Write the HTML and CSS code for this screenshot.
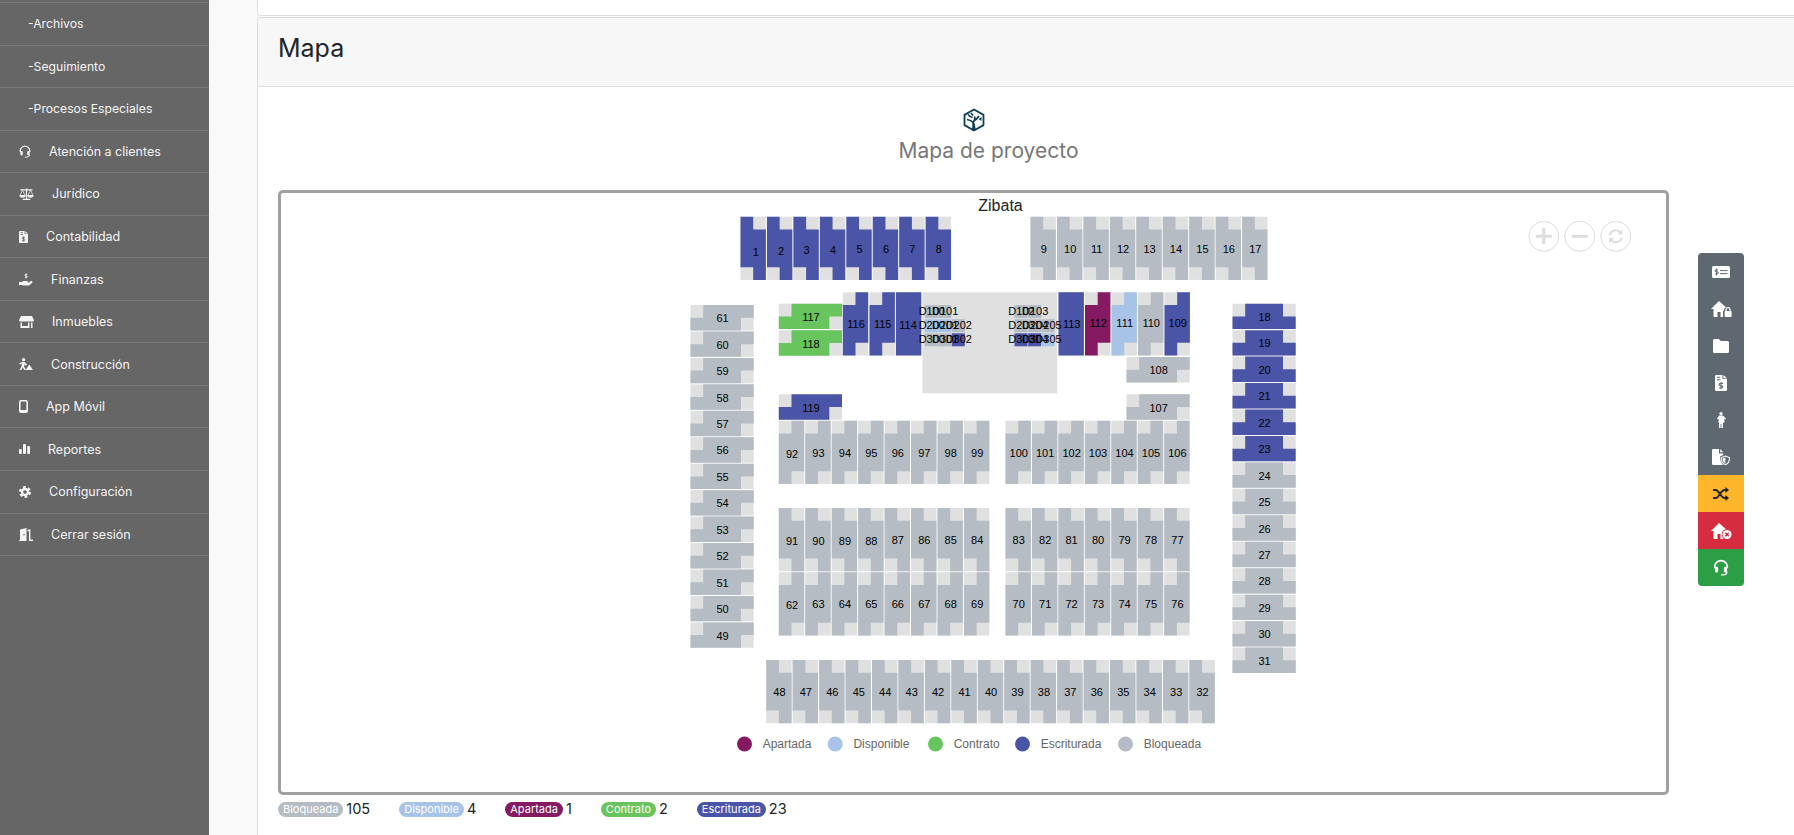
FILE: index.html
```html
<!DOCTYPE html>
<html lang="es">
<head>
  <meta charset="UTF-8" />
  <title>Mapa de proyecto</title>
  <link rel="stylesheet" href="styles.css">
</head>
<body>
  <!-- icon sprite -->
  <svg class="sprite" xmlns="http://www.w3.org/2000/svg">
    <symbol id="i-headset" viewBox="0 0 12 13">
      <path d="M1.2 7V6a4.8 4.8 0 0 1 9.6 0v1" fill="none" stroke="currentColor" stroke-width="1.3"/>
      <rect x="1.4" y="6" width="2.4" height="4.4" rx="1.1" fill="currentColor"/>
      <rect x="8.2" y="6" width="2.4" height="4.4" rx="1.1" fill="currentColor"/>
      <path d="M10.6 9.5c0 1.900-1.400 2.600-3 2.600H6" fill="none" stroke="currentColor" stroke-width="1"/>
    </symbol>
    <symbol id="i-scale" viewBox="0 0 15 12">
      <path d="M7.5.5v10.2M3.8 11.3h7.4M1.5 1.8h12" fill="none" stroke="currentColor" stroke-width="1.2"/>
      <path d="M3.5 2L1 7.5h5zM11.5 2L9 7.5h5z" fill="none" stroke="currentColor" stroke-width=".7"/>
      <path d="M.3 7.3a3.2 2.4 0 0 0 6.4 0zM8.3 7.3a3.2 2.4 0 0 0 6.4 0z" fill="currentColor"/>
    </symbol>
    <symbol id="i-file-dollar" viewBox="0 0 9 12">
      <path d="M1 0h4.6v3H9v8a1 1 0 0 1-1 1H1a1 1 0 0 1-1-1V1a1 1 0 0 1 1-1zM6.3 0L9 2.4H6.3z" fill="currentColor"/>
      <path d="M1.4 1.7h2.6M1.4 3.5h2.6M6 6.3H4a.8.8 0 0 0 0 1.7h1a.8.8 0 0 1 0 1.7H3M4.5 5.5v5" fill="none" stroke="var(--cut)" stroke-width=".8"/>
    </symbol>
    <symbol id="i-hand" viewBox="0 0 14 13">
      <path d="M0 9h2.6l1.9-1.1H8a1 1 0 0 1 0 2.1H6.2h2.5l3-1.8a1 1 0 0 1 1.4 1.6l-3 2.6H4.2L2.8 12H0z" fill="currentColor"/>
      <path d="M8.2 1.4H6.6a.7.7 0 0 0 0 1.5h.9a.7.7 0 0 1 0 1.5H5.8M7 .4v5" fill="none" stroke="currentColor" stroke-width=".8"/>
    </symbol>
    <symbol id="i-store" viewBox="0 0 15 12">
      <path d="M2 0h11l2 4.2a1.2 1.2 0 0 1-1 1.3H1a1.2 1.2 0 0 1-1-1.300zM1.5 6.5H3V10h6V6.5h1.5V12h-9zM12 6.5h1.5V12H12z" fill="currentColor"/>
    </symbol>
    <symbol id="i-digging" viewBox="0 0 14 12">
      <circle cx="4.6" cy="1.8" r="1.7" fill="currentColor"/>
      <path d="M2.8 4h3.1L8 6.8l-1 .9-1.500-1.200L5 8.600 7 12H5.400L3.700 9.600 2.300 12H.6l2-4zM.2 5.600L2.600 4l.4 1-2.200 1.600zM6.600 12l3.600-5.400L14 12z" fill="currentColor"/>
    </symbol>
    <symbol id="i-mobile" viewBox="0 0 9 13">
      <rect x=".8" y=".8" width="7.4" height="11.4" rx="1.3" fill="none" stroke="currentColor" stroke-width="1.6"/>
      <rect x="1" y="10" width="7" height="2.4" fill="currentColor"/>
    </symbol>
    <symbol id="i-bars" viewBox="0 0 11 10">
      <rect x="0" y="5" width="2.8" height="5" rx="1" fill="currentColor"/>
      <rect x="4" y="0" width="3" height="10" rx="1" fill="currentColor"/>
      <rect x="8.2" y="2" width="2.8" height="8" rx="1" fill="currentColor"/>
    </symbol>
    <symbol id="i-cog" viewBox="-6 -6 12 12">
      <circle r="4.9" fill="none" stroke="currentColor" stroke-width="2.2" stroke-dasharray="2.7 2.43"/>
      <circle r="3" fill="none" stroke="currentColor" stroke-width="2.4"/>
    </symbol>
    <symbol id="i-door" viewBox="0 0 14 13">
      <path d="M0 13v-1h1V1.4L7.5 0v13zM5 6a.8.8 0 1 0 0 1.6.8.8 0 0 0 0-1.6z" fill="currentColor" fill-rule="evenodd"/>
      <path d="M8.5 1.6h2.9v9.8H14V13h-4V3.2H8.5z" fill="currentColor"/>
    </symbol>
    <symbol id="i-check" viewBox="0 0 18 12">
      <rect width="18" height="12" rx="1.6" fill="currentColor"/>
      <path d="M5.8 3.8H4a.9.9 0 0 0 0 2h1.2a.9.9 0 0 1 0 2.2H3.2M4.6 2.6v6.8M8 4.6h7.500M8 7.600h7.500" fill="none" stroke="var(--cut)" stroke-width="1"/>
    </symbol>
    <symbol id="i-house-lock" viewBox="0 0 21 16">
      <path d="M8 0l7 6.2a4 4 0 0 0-2.3 3.8H12v6H9.5v-5h-3v5H3.5a1 1 0 0 1-1-1V8H0z" fill="currentColor"/>
      <path d="M15 10V8.6a2 2 0 0 1 4 0V10" fill="none" stroke="currentColor" stroke-width="1.2"/>
      <rect x="13.6" y="10" width="7" height="6" rx="1" fill="currentColor"/>
    </symbol>
    <symbol id="i-folder" viewBox="0 0 16 14">
      <path d="M1.6 0h4.2l2 2h6.6A1.6 1.6 0 0 1 16 3.6v8.8a1.6 1.6 0 0 1-1.6 1.6H1.6A1.6 1.6 0 0 1 0 12.4V1.6A1.6 1.6 0 0 1 1.6 0z" fill="currentColor"/>
    </symbol>
    <symbol id="i-person" viewBox="0 0 10 16">
      <circle cx="5" cy="1.6" r="1.6" fill="currentColor"/>
      <path d="M3 3.6h4l3 3.2-1 .8-1-1 .7 3.4L7 11v5H5.4v-4h-.8v4H3v-5l-.7-.9L3 6.600l-1 1-1-.8z" fill="currentColor"/>
    </symbol>
    <symbol id="i-file-shield" viewBox="0 0 18 16">
      <path d="M1.2 0H7v4.4h4.2V6L8 7.400c0 3.400 1 6.400 3 8.600H1.200A1.200 1.200 0 0 1 0 14.800V1.200A1.200 1.200 0 0 1 1.200 0zM8.200 0l3 3.200h-3z" fill="currentColor"/>
      <path d="M13.4 7l4.2 1.6c0 3-1 6-4.2 7.2-3.2-1.200-4.200-4.200-4.200-7.200z" fill="none" stroke="currentColor" stroke-width="1.1"/>
      <path d="M13.4 8.4v6c-1.800-.9-2.800-3-2.900-5z" fill="currentColor"/>
    </symbol>
    <symbol id="i-shuffle" viewBox="0 0 16 14">
      <path d="M0 3h2.6c3.600 0 5 8 9 8h1.400M0 11h2.600c3.600 0 5-8 9-8h1.400" fill="none" stroke="currentColor" stroke-width="1.9"/>
      <path d="M12.4 0L16 3l-3.6 3zM12.4 8L16 11l-3.6 3z" fill="currentColor"/>
    </symbol>
    <symbol id="i-house-x" viewBox="0 0 21 16">
      <path d="M8 0l7 6.200a5 5 0 0 0-4.200 4.800c0 2 .6 3.600 1.800 5H9.500v-5h-3v5H3.500a1 1 0 0 1-1-1V8H0z" fill="currentColor"/>
      <circle cx="16" cy="11.5" r="4.5" fill="currentColor"/>
      <path d="M14.3 9.800l3.400 3.400M17.700 9.800l-3.400 3.400" fill="none" stroke="var(--cut)" stroke-width="1.5"/>
    </symbol>
    <symbol id="i-tree" viewBox="0 0 24 24">
      <path d="M12 1.500l9.500 5.400v10.200L12 22.500 2.500 17.100V6.900z" fill="none" stroke="currentColor" stroke-width="1.8" stroke-linejoin="round"/>
      <path d="M11 21.500c.5-3 .5-5 0-7-1.500-2-3.500-2.500-6-3M11.200 15c1.500-2 1.800-4 1.600-6.500M11.500 13c2-1 4-2.500 5.500-5M6 6.500c1.200 1.500 2.500 2.500 4.500 3M9 5l2 2.500" fill="none" stroke="currentColor" stroke-width="1.7"/>
      <path d="M9.500 22.200c1-1.800 1.400-4.200 1.500-7l2 .5c0 2.500.4 4.800 1.300 6.300z" fill="currentColor"/>
      <path d="M16.500 11l3-2v4z" fill="currentColor"/>
    </symbol>
  </svg>

  <aside class="sidebar">
    <ul class="nav">
      <li class="nav-item nav-sub">-Archivos</li>
      <li class="nav-item nav-sub">-Seguimiento</li>
      <li class="nav-item nav-sub">-Procesos Especiales</li>
      <li class="nav-item"><svg width="12" height="13"><use href="#i-headset"/></svg>Atención a clientes</li>
      <li class="nav-item"><svg width="15" height="12"><use href="#i-scale"/></svg>Jurídico</li>
      <li class="nav-item"><svg width="9" height="12"><use href="#i-file-dollar"/></svg>Contabilidad</li>
      <li class="nav-item"><svg width="14" height="13"><use href="#i-hand"/></svg>Finanzas</li>
      <li class="nav-item"><svg width="15" height="12"><use href="#i-store"/></svg>Inmuebles</li>
      <li class="nav-item"><svg width="14" height="12"><use href="#i-digging"/></svg>Construcción</li>
      <li class="nav-item"><svg width="9" height="13"><use href="#i-mobile"/></svg>App Móvil</li>
      <li class="nav-item"><svg width="11" height="10"><use href="#i-bars"/></svg>Reportes</li>
      <li class="nav-item"><svg width="12" height="12"><use href="#i-cog"/></svg>Configuración</li>
      <li class="nav-item"><svg width="14" height="13"><use href="#i-door"/></svg>Cerrar sesión</li>
    </ul>
  </aside>

  <main class="content">
    <div class="card-stub"></div>
    <section class="card">
      <header class="card-header">
        <h2>Mapa</h2>
      </header>
      <div class="card-body">
        <div class="map-heading">
          <svg class="map-logo" width="24" height="24"><use href="#i-tree"/></svg>
          <h3>Mapa de proyecto</h3>
        </div>
        <div class="map-box">
          <svg id="map" xmlns="http://www.w3.org/2000/svg"></svg>
        </div>
        <div class="totals">
          <div class="total"><span class="badge badge-bloqueada">Bloqueada</span>105</div>
          <div class="total"><span class="badge badge-disponible">Disponible</span>4</div>
          <div class="total"><span class="badge badge-apartada">Apartada</span>1</div>
          <div class="total"><span class="badge badge-contrato">Contrato</span>2</div>
          <div class="total"><span class="badge badge-escriturada">Escriturada</span>23</div>
        </div>
      </div>
    </section>
  </main>

  <div class="toolbar">
    <button class="tool tool-gray"><svg width="18" height="12"><use href="#i-check"/></svg></button>
    <button class="tool tool-gray"><svg width="21" height="16"><use href="#i-house-lock"/></svg></button>
    <button class="tool tool-gray"><svg width="16" height="14"><use href="#i-folder"/></svg></button>
    <button class="tool tool-gray"><svg width="12" height="16"><use href="#i-file-dollar"/></svg></button>
    <button class="tool tool-gray"><svg width="10" height="16"><use href="#i-person"/></svg></button>
    <button class="tool tool-gray"><svg width="18" height="16"><use href="#i-file-shield"/></svg></button>
    <button class="tool tool-warning"><svg width="16" height="14"><use href="#i-shuffle"/></svg></button>
    <button class="tool tool-danger"><svg width="21" height="16"><use href="#i-house-x"/></svg></button>
    <button class="tool tool-success"><svg width="16" height="17"><use href="#i-headset"/></svg></button>
  </div>

  <script src="map.js"></script>
</body>
</html>
```

FILE: styles.css
```css
body {
    margin: 0;
    height: 100vh;
    display: flex;
    overflow: hidden;
    background-color: #f9f9f9;
    font-family: Inter, "Open Sans", sans-serif;
}

.sprite {
    display: none;
}

.sidebar {
    --cut: #666666;
    width: 209px;
    flex-shrink: 0;
    padding-top: 2px;
    background-color: #666666;
    color: #ffffff;
}

.nav {
    margin: 0;
    padding: 0;
    list-style: none;
    border-top: 1px solid #787878;
}

.nav-item {
    height: 42.55px;
    box-sizing: border-box;
    display: flex;
    align-items: center;
    gap: 18px;
    padding-left: 19px;
    border-bottom: 1px solid #787878;
    font-size: 12.5px;
    color: #f4f4f4;
}

.nav-sub {
    padding-left: 28px;
    font-size: 12.2px;
}

.content {
    flex: 1;
    min-width: 0;
    height: 100%;
    display: flex;
    flex-direction: column;
    padding-left: 48px;
}

.card-stub {
    height: 16px;
    flex-shrink: 0;
    box-sizing: border-box;
    background-color: #ffffff;
    border: 1px solid #dddddd;
    border-top: none;
    border-right: none;
    border-radius: 0 0 0 4px;
}

.card {
    flex: 1;
    min-height: 0;
    margin-top: 1px;
    background-color: #ffffff;
    border: 1px solid #dddddd;
    border-right: none;
    border-bottom: none;
    border-radius: 4px 0 0 0;
}

.card-header {
    height: 69px;
    box-sizing: border-box;
    display: flex;
    align-items: center;
    padding-left: 20px;
    padding-bottom: 8px;
    background-color: #f7f7f7;
    border-bottom: 1px solid #dddddd;
}

.card-header h2 {
    margin: 0;
    font-size: 25px;
    font-weight: 400;
    color: #212529;
}

.card-body {
    padding: 0 125px 0 20px;
}

.map-heading {
    height: 103px;
    padding-top: 21px;
    box-sizing: border-box;
    display: flex;
    flex-direction: column;
    align-items: center;
}

.map-logo {
    color: #0f3d50;
}

.map-heading h3 {
    margin: 6px 0 0 30px;
    font-size: 21px;
    line-height: 25px;
    font-weight: 400;
    color: #777777;
}

.map-box {
    height: 605px;
    box-sizing: border-box;
    border: 3px solid #a0a0a0;
    border-radius: 5px;
}

#map {
    display: block;
    width: 100%;
    height: 100%;
    font-family: "Liberation Sans", Arial, sans-serif;
}

.totals {
    display: flex;
    gap: 29px;
    margin-top: 6px;
    font-size: 14.5px;
    color: #212529;
}

.total {
    display: flex;
    align-items: flex-start;
    gap: 3px;
    line-height: 16px;
}

.badge {
    padding: 0 5px;
    margin-top: 1px;
    border-radius: 8px;
    font-size: 11px;
    line-height: 15px;
    color: #ffffff;
}

.badge-bloqueada { background-color: #b5bcc3; }
.badge-disponible { background-color: #a7c3e8; }
.badge-apartada { background-color: #851a63; }
.badge-contrato { background-color: #68c45c; }
.badge-escriturada { background-color: #4b55a8; }

/* floating actions on the right side */
.toolbar {
    position: absolute;
    top: 253px;
    right: 50px;
    width: 46px;
    display: flex;
    flex-direction: column;
    border-radius: 4px;
    overflow: hidden;
}

.tool {
    height: 37px;
    padding: 0;
    border: none;
    display: flex;
    align-items: center;
    justify-content: center;
    color: #ffffff;
}

.tool-gray {
    --cut: #5f6770;
    background-color: #5f6770;
}

.tool-warning {
    background-color: #fdb52b;
    color: #222222;
}

.tool-danger {
    --cut: #d62c3f;
    background-color: #d62c3f;
}

.tool-success {
    background-color: #2b9e46;
}
```

FILE: map.js
```js
// Draws the lots of the project map. Coordinates are page pixels, see viewBox.
const SVG_NS = 'http://www.w3.org/2000/svg';
const map = document.getElementById('map');
map.setAttribute('viewBox', '281 193 1384 599');

const colors = {
    apartada: '#851a63',
    disponible: '#a7c3e8',
    contrato: '#68c45c',
    escriturada: '#4b55a8',
    bloqueada: '#b5bcc3'
};
const NOTCH_COLOR = '#e0e0e0';
const PITCH = 26.45;
const LONG = 63.2;
const SHORT = 25.4;
const N = 12.7;

const escrituradas = [109, 113, 114, 115, 116, 119];

// some labels sit a little off the lot centre
const labelOffsets = {
    1: [2, 3], 2: [1, 2], 3: [0, 1], 4: [0, 1],
    92: [0, 1], 62: [0, 1], 91: [0, 1], 90: [0, 1], 89: [0, 1], 88: [0, 1],
    114: [-1, 1], 112: [0, -1], 111: [0, -1], 110: [0, -1], 109: [0, -1]
};

function statusOf(num) {
    if ((num >= 1 && num <= 8) || (num >= 18 && num <= 23) || escrituradas.includes(num)) return 'escriturada';
    if (num === 117 || num === 118) return 'contrato';
    if (num === 112) return 'apartada';
    if (num === 111) return 'disponible';
    return 'bloqueada';
}

function add(tag, attrs, text) {
    const el = document.createElementNS(SVG_NS, tag);
    for (const key in attrs) el.setAttribute(key, attrs[key]);
    if (text !== undefined) el.textContent = text;
    map.appendChild(el);
    return el;
}

function shapePoints(shape, x, y, w, h) {
    const r = x + w, b = y + h;
    if (shape === 'tlbr') return [[x + N, y], [r, y], [r, b - N], [r - N, b - N], [r - N, b], [x, b], [x, y + N], [x + N, y + N]];
    if (shape === 'trbl') return [[x, y], [r - N, y], [r - N, y + N], [r, y + N], [r, b], [x + N, b], [x + N, b - N], [x, b - N]];
    if (shape === 'tltr') return [[x + N, y], [r - N, y], [r - N, y + N], [r, y + N], [r, b], [x, b], [x, y + N], [x + N, y + N]];
    return [[x, y], [r, y], [r, b], [x, b]];
}

function lot(num, shape, x, y, w, h) {
    const offset = labelOffsets[num] || [0, 0];
    add('rect', { x: x, y: y, width: w, height: h, fill: NOTCH_COLOR });
    add('polygon', { points: shapePoints(shape, x, y, w, h).join(' '), fill: colors[statusOf(num)] });
    add('text', {
        x: x + w / 2 + 0.5 + offset[0],
        y: y + h / 2 + 4.5 + offset[1],
        'text-anchor': 'middle',
        'font-size': 11,
        fill: '#000000'
    }, num);
}

// a run of lots from `from` to `to`, standing side by side or stacked
function run(from, to, shape, x, y, vertical) {
    const step = from <= to ? 1 : -1;
    let i = 0;
    for (let num = from; num !== to + step; num += step) {
        if (vertical) lot(num, shape, x, y + i * PITCH, LONG, SHORT);
        else lot(num, shape, x + i * PITCH, y, SHORT, LONG);
        i++;
    }
}

// centre block with the small D lots
add('rect', { x: 922, y: 292.3, width: 134.7, height: 101, fill: NOTCH_COLOR });

run(1, 8, 'trbl', 740, 216.7);
run(9, 17, 'trbl', 1030, 216.7);
run(18, 31, 'tltr', 1232, 303.7, true);
run(48, 32, 'trbl', 765.7, 660);
run(61, 49, 'tlbr', 690, 305, true);
run(92, 99, 'tlbr', 778.3, 420.7);
run(100, 106, 'tlbr', 1005, 420.7);
run(91, 84, 'trbl', 778.3, 508);
run(83, 77, 'trbl', 1005, 508);
run(62, 69, 'tlbr', 778.3, 572.3);
run(70, 76, 'tlbr', 1005, 572.3);

lot(117, 'tlbr', 778.3, 303.7, LONG, SHORT);
lot(118, 'tlbr', 778.3, 330.3, LONG, SHORT);
lot(119, 'tlbr', 778.3, 394.3, LONG, SHORT);
lot(108, 'tlbr', 1126, 357, LONG, SHORT);
lot(107, 'tlbr', 1126, 394.3, LONG, SHORT);

lot(116, 'tlbr', 842.3, 292.3, SHORT, LONG);
lot(115, 'tlbr', 869, 292.3, SHORT, LONG);
lot(114, 'solid', 895.4, 292.3, SHORT, LONG);
lot(113, 'solid', 1058, 292.3, SHORT, LONG);
lot(112, 'tlbr', 1084.5, 292.3, SHORT, LONG);
lot(111, 'tlbr', 1111, 292.3, SHORT, LONG);
lot(110, 'tlbr', 1137.5, 292.3, SHORT, LONG);
lot(109, 'tlbr', 1164, 292.3, SHORT, LONG);

const smallLots = [
    ['D100', 924.3, 305, 'bloqueada'], ['D101', 937.7, 305, 'bloqueada'],
    ['D200', 924.3, 319.2, 'disponible'], ['D201', 937.7, 319.2, 'disponible'], ['D202', 951.3, 319.2, 'bloqueada'],
    ['D300', 924.3, 333.3, 'bloqueada'], ['D301', 937.7, 333.3, 'bloqueada'], ['D302', 951.3, 333.3, 'escriturada'],
    ['D102', 1014, 305, 'bloqueada'], ['D103', 1027.7, 305, 'bloqueada'],
    ['D203', 1014, 319.2, 'bloqueada'], ['D204', 1027.7, 319.2, 'bloqueada'], ['D205', 1041, 319.2, 'bloqueada'],
    ['D303', 1014, 333.3, 'escriturada'], ['D304', 1027.7, 333.3, 'escriturada'], ['D305', 1041, 333.3, 'disponible']
];

smallLots.forEach(([, x, y, status]) => {
    add('rect', { x: x, y: y, width: 13, height: 13, fill: colors[status] });
});
smallLots.forEach(([name, x, y]) => {
    add('text', { x: x + 7, y: y + 9.5, 'text-anchor': 'middle', 'font-size': 11, fill: '#000000' }, name);
});

add('text', { x: 1000, y: 211, 'text-anchor': 'middle', 'font-size': 16, fill: '#222222' }, 'Zibata');

// legend
[
    ['Apartada', 745, 'apartada'],
    ['Disponible', 835.7, 'disponible'],
    ['Contrato', 936, 'contrato'],
    ['Escriturada', 1023, 'escriturada'],
    ['Bloqueada', 1126, 'bloqueada']
].forEach(([label, cx, status]) => {
    add('circle', { cx: cx - 1, cy: 744, r: 7.5, fill: colors[status] });
    add('text', { x: cx + 17.2, y: 748, 'font-size': 12, fill: '#666666' }, label);
});

// zoom buttons
[1543.3, 1579.3, 1615.3].forEach(cx => {
    add('circle', { cx: cx, cy: 236.3, r: 15, fill: '#ffffff', stroke: '#dddddd', 'stroke-width': 1 });
});
const zoomLines = { stroke: '#dddddd', 'stroke-width': 3, fill: 'none' };
add('path', Object.assign({ d: 'M1535.3 236.3h16M1543.3 228.3v16' }, zoomLines));
add('path', Object.assign({ d: 'M1571.3 236.3h16' }, zoomLines));
add('path', Object.assign({ d: 'M1609.3 235a6 6 0 0 1 10.5-2.5M1621.3 237.6a6 6 0 0 1-10.5 2.5' }, zoomLines, { 'stroke-width': 2 }));
add('path', { d: 'M1622 229.5v5h-5zM1608.6 243v-5h5z', fill: '#dddddd' });
```
